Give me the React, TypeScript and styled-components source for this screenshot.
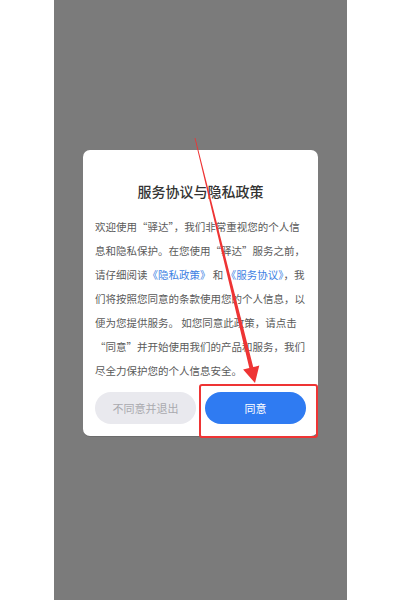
import styled, { createGlobalStyle } from "styled-components";

const GlobalStyle = createGlobalStyle`
  html, body {
    margin: 0;
    padding: 0;
    background: #ffffff;
  }
  * {
    box-sizing: border-box;
  }
`;

const bodyLines: { text: string; link?: boolean }[][] = [
  [{ text: "欢迎使用“驿达”，我们非常重视您的个人信" }],
  [{ text: "息和隐私保护。在您使用“驿达”服务之前，" }],
  [
    { text: "请仔细阅读" },
    { text: "《隐私政策》", link: true },
    { text: " 和 " },
    { text: "《服务协议》", link: true },
    { text: "，我" },
  ],
  [{ text: "们将按照您同意的条款使用您的个人信息，以" }],
  [{ text: "便为您提供服务。 如您同意此政策，请点击" }],
  [{ text: "“同意”并开始使用我们的产品和服务，我们" }],
  [{ text: "尽全力保护您的个人信息安全。" }],
];

const App = () => {
  return (
    <>
      <GlobalStyle />
      <Page>
        <Screen>
          <Dialog>
            <Title>服务协议与隐私政策</Title>
            <Body>
              {bodyLines.map((parts, i) => (
                <Line key={i}>
                  {parts.map((p, j) =>
                    p.link ? <Link key={j}>{p.text}</Link> : <span key={j}>{p.text}</span>
                  )}
                </Line>
              ))}
            </Body>
            <Actions>
              <Button variant="ghost">不同意并退出</Button>
              <Button variant="primary">同意</Button>
            </Actions>
          </Dialog>
        </Screen>
        <Annotation width="400" height="600" viewBox="0 0 400 600">
          <polygon
            points="195.4,137.9 253.2,367.1 259.3,365.6 255,383 243.1,369.4 249.3,367.9 194.6,138.1"
            fill="#ee3434"
          />
          <rect x="200" y="385" width="117" height="52" rx="2" fill="none" stroke="#ee3434" strokeWidth="2" />
        </Annotation>
      </Page>
    </>
  );
};

const Page = styled.div`
  position: relative;
  width: 400px;
  height: 600px;
  display: flex;
  justify-content: center;
  padding-left: 1px;
  font-family: "Noto Sans CJK SC", "Noto Sans", sans-serif;
`;

const Screen = styled.div`
  width: 293px;
  height: 600px;
  background: #7b7b7b;
  display: flex;
  flex-direction: column;
  align-items: center;
  padding-top: 150px;
`;

const Dialog = styled.div`
  width: 235px;
  background: #ffffff;
  border-radius: 7px;
  padding: 31px 12px 12px;
  display: flex;
  flex-direction: column;
  box-shadow: 0 1px 0 rgba(0, 0, 0, 0.12);
`;

const Title = styled.div`
  text-align: center;
  font-size: 14px;
  line-height: 20px;
  font-weight: 500;
  color: #333333;
  margin-bottom: 14px;
`;

const Body = styled.div`
  display: flex;
  flex-direction: column;
`;

const Line = styled.div`
  font-size: 10.5px;
  line-height: 24px;
  height: 24px;
  color: #5a5a5a;
  white-space: nowrap;
`;

const Link = styled.span`
  color: #3d7fe3;
`;

const Actions = styled.div`
  display: grid;
  grid-template-columns: 1fr 1fr;
  gap: 9px;
  margin-top: 9px;
`;

const Button = styled.button<{ variant: "ghost" | "primary" }>`
  height: 32px;
  border: 0;
  border-radius: 16px;
  font-family: inherit;
  font-size: 11px;
  cursor: pointer;
  background: ${({ variant }) => (variant === "primary" ? "#2f7bf2" : "#e9e9ee")};
  color: ${({ variant }) => (variant === "primary" ? "#ffffff" : "#a9a9ae")};
`;

const Annotation = styled.svg`
  position: absolute;
  top: 0;
  left: 0;
  pointer-events: none;
`;

export default App;
